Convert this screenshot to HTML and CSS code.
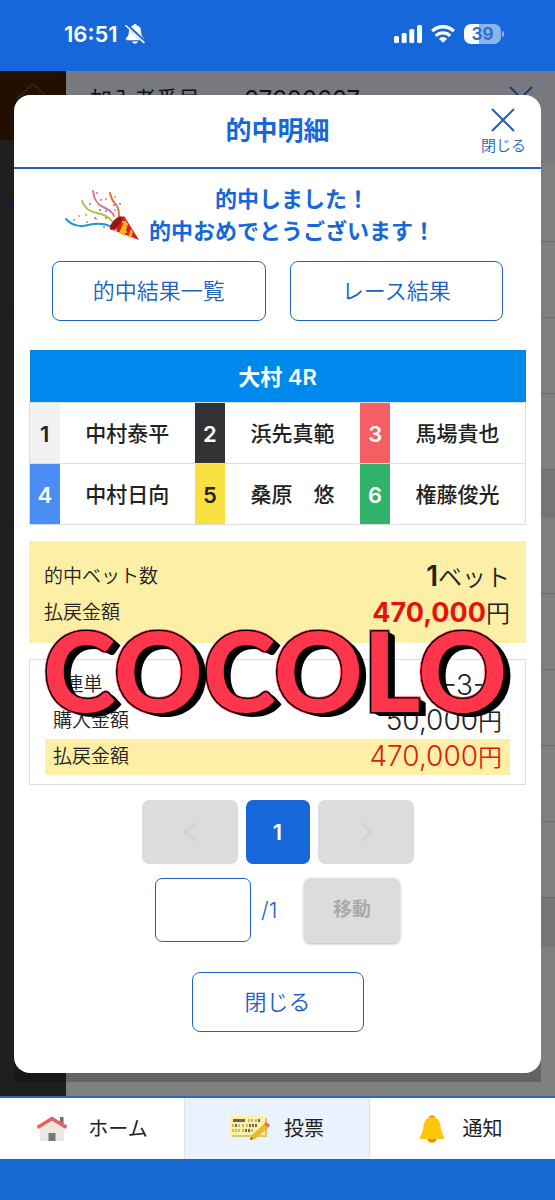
FILE: index.html
```html
<!DOCTYPE html>
<html lang="ja">
<head>
<meta charset="utf-8">
<meta name="viewport" content="width=device-width, initial-scale=1">
<title>的中明細</title>
<link rel="stylesheet" href="styles.css">
</head>
<body>
<header class="status">
  <div class="status-side">
    <span class="clock">16:51</span>
    <svg class="mute" viewBox="0 0 20 20" aria-hidden="true">
      <path d="M10 0C9 0 8.300.7 8.200 1.600 5 2.300 3.900 4.800 3.900 7.600c0 3.500-1 5-2.600 6.400-.9.900-.5 2.200.7 2.200h16c1.200 0 1.600-1.300.7-2.200-1.600-1.400-2.600-2.900-2.600-6.400 0-2.800-1.100-5.300-4.300-6C11.700.7 11 0 10 0zM7.200 17.400c.3 1.400 1.300 2.200 2.800 2.200s2.500-.8 2.800-2.200z" fill="#fff"/>
      <path d="M1.500 1 20 18.200" stroke="#1667d9" stroke-width="3.600"/>
      <path d="M1 1.800 19 18.600" stroke="#fff" stroke-width="1.500" stroke-linecap="round"/>
    </svg>
  </div>
  <div class="status-side status-right">
    <svg class="signal" viewBox="0 0 28 18" aria-hidden="true"><g fill="#fff"><rect x="0" y="11" width="5" height="7" rx="1.500"/><rect x="7.700" y="8" width="5" height="10" rx="1.500"/><rect x="15.300" y="4" width="5" height="14" rx="1.500"/><rect x="23" y="0" width="5" height="18" rx="1.500"/></g></svg>
    <svg class="wifi" viewBox="0 0 24 18" aria-hidden="true"><g fill="none" stroke="#fff" stroke-width="3.300"><path d="M1.200 6.200a15.300 15.300 0 0 1 21.600 0"/><path d="M4.800 10.800a10.200 10.200 0 0 1 14.400 0"/></g><path d="M12 17.800 7.900 13.700a5.800 5.800 0 0 1 8.200 0z" fill="#fff"/></svg>
    <span class="battery">39</span>
  </div>
</header>

<main class="stage">
  <div class="behind" aria-hidden="true">
    <div class="rail">
      <div class="rail-home"><svg viewBox="0 0 40 20"><path d="M3 19 20 3l17 16" fill="none" stroke="#30231c" stroke-width="2"/></svg></div>
      <div class="rail-body"><span class="rail-mark"></span><span class="rail-line"></span></div>
    </div>
    <div class="sheet">
      <div class="sheet-head">
        <span>加入者番号</span><span class="member">07600607</span>
        <svg class="sheet-x" viewBox="0 0 24 24"><path d="M1 1l22 22M23 1 1 23"/></svg>
      </div>
      <div class="line tall"></div><div class="line"></div><div class="line"></div><div class="line"></div>
      <div class="band"></div>
      <div class="line"></div><div class="line"></div><div class="line"></div><div class="line"></div><div class="line"></div>
      <div class="band"></div>
    </div>
  </div>

  <div class="modal-base">
    <section class="modal" role="dialog" aria-labelledby="dialog-title">
      <div class="modal-head">
        <h1 id="dialog-title">的中明細</h1>
        <button class="head-close" type="button">
          <svg viewBox="0 0 24 24" aria-hidden="true"><path d="M1 1l22 22M23 1 1 23"/></svg>
          <span>閉じる</span>
        </button>
      </div>

      <div class="congrats">
        <svg class="cracker" viewBox="0 0 74 52" aria-hidden="true">
          <g fill="none" stroke-linecap="round" stroke-width="2">
            <path d="M28 2c1 9 4 13 10 16 5 2 9 4 11 9" stroke="#e46d9f"/>
            <path d="M45 4c1 7 4 9 7 13 2 3 2 6 2 11" stroke="#ec7148"/>
            <path d="M17 12c3 8 8 11 15 12 6 1 11 3 15 8" stroke="#a2c63c"/>
            <path d="M1 30c6 7 15 8 22 6 8-2 15-2 22 1" stroke="#169bda"/>
          </g>
          <g fill="#e2617f"><circle cx="32" cy="4" r="1"/><circle cx="36" cy="11" r="1"/><circle cx="9" cy="31" r="1"/><circle cx="41" cy="29" r="1"/><circle cx="39" cy="38" r="1"/><circle cx="49" cy="16" r="1"/></g>
          <g fill="#4a86d8"><circle cx="25" cy="15" r="1"/><circle cx="35" cy="21" r="1"/><circle cx="41" cy="22" r="1"/><circle cx="55" cy="15" r="1"/><circle cx="30" cy="29" r="1"/></g>
          <g fill="#e89443"><circle cx="50" cy="8" r="1"/><circle cx="41" cy="10" r="1"/><circle cx="14" cy="27" r="1"/><circle cx="31" cy="30" r="1"/><circle cx="50" cy="21" r="1"/></g>
          <g fill="#8cba3c"><circle cx="21" cy="26" r="1"/><circle cx="22" cy="33" r="1"/><circle cx="34" cy="16" r="1"/></g>
          <path d="M45 40 56 28q4-2 5 2l13 21z" fill="#dc2218"/>
          <path d="m54 44 6-13 3 4-4 12zM63 48l3-8 2 3-2 6z" fill="#f4b51e"/>
          <ellipse cx="51" cy="34" rx="8.500" ry="3.400" transform="rotate(-48 51 34)" fill="#901b16"/>
          <g fill="#fbd65c"><circle cx="51" cy="41" r="1"/><circle cx="61" cy="43" r="1"/><circle cx="58" cy="33" r="1"/></g>
        </svg>
        <p>的中しました！<br>的中おめでとうございます！</p>
      </div>

      <div class="links">
        <button class="outline" type="button">的中結果一覧</button>
        <button class="outline" type="button">レース結果</button>
      </div>

      <table class="race">
        <colgroup><col class="c-no"><col><col class="c-no"><col><col class="c-no"><col></colgroup>
        <thead><tr><th colspan="6">大村 4R</th></tr></thead>
        <tbody>
          <tr><th class="n1">1</th><td>中村泰平</td><th class="n2">2</th><td>浜先真範</td><th class="n3">3</th><td>馬場貴也</td></tr>
          <tr><th class="n4">4</th><td>中村日向</td><th class="n5">5</th><td>桑原　悠</td><th class="n6">6</th><td>権藤俊光</td></tr>
        </tbody>
      </table>

      <div class="result">
        <dl class="summary">
          <div class="row"><dt>的中ベット数</dt><dd><b>1</b><span class="unit">ベット</span></dd></div>
          <div class="row"><dt>払戻金額</dt><dd><b class="win">470,000</b><span class="unit">円</span></dd></div>
        </dl>
        <dl class="detail">
          <div class="row"><dt>3連単</dt><dd>1-3-2</dd></div>
          <div class="row"><dt>購入金額</dt><dd>50,000<span class="unit">円</span></dd></div>
          <div class="row paid"><dt>払戻金額</dt><dd>470,000<span class="unit">円</span></dd></div>
        </dl>
        <div class="stamp">COCOLO</div>
      </div>

      <nav class="pager" aria-label="ページ">
        <button class="page" type="button" disabled aria-label="前へ"><svg viewBox="0 0 12 20"><path d="M11 1 1 10l10 9"/></svg></button>
        <button class="page current" type="button" aria-current="page">1</button>
        <button class="page" type="button" disabled aria-label="次へ"><svg viewBox="0 0 12 20"><path d="m1 1 10 9-10 9"/></svg></button>
      </nav>

      <form class="jump">
        <input id="page-no" type="text" inputmode="numeric" aria-label="ページ番号">
        <label for="page-no">/1</label>
        <button class="move" type="button" disabled>移動</button>
      </form>

      <button class="outline close" type="button">閉じる</button>
    </section>
  </div>
</main>

<nav class="tabs">
  <a href="#home">
    <svg class="i-home" viewBox="0 0 32 26" aria-hidden="true"><rect x="24" y="1" width="3.500" height="9" fill="#6f6f72"/><path d="M4 11 16 3l12 8v14H4z" fill="#ebe7e2"/><path d="M1.500 11.500 16 2.500l14.500 9" fill="none" stroke="#e16360" stroke-width="3.400"/><rect x="12.500" y="17" width="7" height="8" fill="#777576"/></svg>
    <span>ホーム</span>
  </a>
  <a href="#vote" class="active">
    <svg class="i-vote" viewBox="0 0 40 26" aria-hidden="true">
      <path d="M2 2h35v19H2z" fill="#d8c36a"/><path d="M0 0h35v19H0z" fill="#fdf1a8"/><rect x="3" y="3" width="12" height="3" fill="#6c6548"/>
      <g stroke="#a79b68" stroke-width="1.300" fill="none"><path d="M19 3v3M22 3v3M26 3v3M3 8v3M9 8v3M13 8v3M17 8v3M3 13v3M6 13v3M9 13v3M13 13v3M22 13v3"/></g>
      <g stroke="#514b35" stroke-width="1.600"><path d="M29 3v3M6 8v3M20 8v3M23 8v3M26 8v3M16 13v3M19 13v3"/></g>
      <path d="m20 24 2-5L34 8l4 4-13 11z" fill="#e9b924"/><path d="m34 8 2-2 4 3-2 3z" fill="#e36c57"/><path d="m20 24 1-3 2 2z" fill="#6b5429"/>
    </svg>
    <span>投票</span>
  </a>
  <a href="#notice">
    <svg class="i-bell" viewBox="0 0 26 28" aria-hidden="true"><circle cx="13" cy="4" r="3.500" fill="#e07f0b"/><circle cx="13" cy="23" r="4.800" fill="#f08a00"/><path d="M13 2C7.500 2 5 6 4.500 11S3 18 1 21.500C0 23 .5 24 2 24h22c1.500 0 2-1 1-2.500C23 18 22 16 21.500 11S18.500 2 13 2z" fill="#ffc60a"/></svg>
    <span>通知</span>
  </a>
</nav>
<div class="foot"></div>
</body>
</html>
```

FILE: styles.css
```css
* { box-sizing: border-box; }

:root {
  --blue: #1667d9;
  --line-blue: #2162bd;
  --ink: #222;
  --cream: #feefa6;
  --rule: #dcdcdc;
}

body {
  margin: 0;
  min-height: 100vh;
  display: flex;
  flex-direction: column;
  font-family: Inter, "Noto Sans CJK JP", sans-serif;
  font-size: 22px;
  line-height: 32px;
  color: var(--ink);
  background: #7f7f7f;
}

button, input { font: inherit; margin: 0; padding: 0; }
h1, p, dl, dd { margin: 0; }
svg { display: block; flex: none; }

/* status bar */
.status {
  display: flex;
  justify-content: space-between;
  align-items: center;
  height: 71px;
  padding: 0 54px 4px 64px;
  background: var(--blue);
  color: #fff;
}
.status-side { display: flex; align-items: center; gap: 7px; }
.status-right { gap: 9px; }
.clock { font-size: 22px; font-weight: 600; }
.mute { width: 20px; height: 20px; }
.signal { width: 28px; height: 18px; }
.wifi { width: 24px; height: 18px; }
.battery {
  position: relative;
  width: 37px;
  height: 20px;
  border-radius: 7px;
  background: linear-gradient(90deg, #fff 40%, #8ab4ef 40%);
  color: #2e6fce;
  font-size: 17px;
  font-weight: 700;
  line-height: 20px;
  text-align: center;
}
.battery::after {
  content: "";
  position: absolute;
  right: -3px;
  top: 7px;
  width: 2px;
  height: 6px;
  border-radius: 0 2px 2px 0;
  background: #8ab4ef;
}

/* dimmed page and dialog share one grid cell */
.stage { flex: 1; display: grid; }
.behind, .modal-base { grid-area: 1 / 1; }
.behind { display: flex; overflow: hidden; }
.rail { width: 66px; background: #201f20; }
.rail-home { height: 69px; padding: 10px 14px; background: #211000; }
.rail-body { display: flex; flex-direction: column; padding-top: 63px; }
.rail-mark { height: 5px; margin-left: 7px; background: #0d1c40; }
.rail-line { height: 2px; margin-top: 103px; background: #101a30; }
.sheet { flex: 1; }
.sheet-head {
  display: flex;
  height: 92px;
  padding: 12px 22px 0 24px;
  background: #77797f;
  color: #111;
}
.member { margin-left: 44px; font-size: 24px; line-height: 34px; }
.sheet-x {
  width: 24px;
  height: 24px;
  margin: 3px 0 0 auto;
  stroke: #143c75;
  stroke-width: 2;
}
.line { height: 76px; border-bottom: 1px solid #6c6c6c; }
.line.tall { height: 79px; }
.band { height: 48px; background: #757575; }

.modal-base {
  align-self: start;
  margin: 24px 14px 14px;
  padding-bottom: 9px;
  border-radius: 16px 16px 0 0;
  background: linear-gradient(transparent 50%, rgba(0, 0, 0, .22) 50%);
}
.modal {
  padding-bottom: 41px;
  border-radius: 16px;
  background: #fff;
  overflow: hidden;
}
.modal-head {
  display: grid;
  grid-template-columns: 1fr auto 1fr;
  align-items: center;
  height: 74px;
  padding: 0 15px;
  border-bottom: 2px solid var(--line-blue);
}
.modal-head h1 {
  grid-column: 2;
  font-size: 26px;
  font-weight: 700;
  line-height: 32px;
  color: var(--blue);
}
.head-close {
  justify-self: end;
  display: flex;
  flex-direction: column;
  align-items: center;
  gap: 4px;
  padding-top: 2px;
  border: 0;
  background: none;
  color: var(--line-blue);
  font-size: 15px;
  font-weight: 350;
  line-height: 20px;
}
.head-close svg { width: 24px; height: 24px; stroke: var(--line-blue); stroke-width: 2; }

.congrats {
  display: flex;
  align-items: center;
  gap: 10px;
  padding: 14px 0 0 51px;
  color: var(--blue);
  font-weight: 700;
}
.cracker { width: 74px; height: 52px; }
.congrats p { text-align: center; white-space: nowrap; }

.links {
  display: grid;
  grid-template-columns: 1fr 1fr;
  gap: 24px;
  padding: 14px 38px 29px;
}
.outline {
  height: 60px;
  border: 1px solid var(--line-blue);
  border-radius: 8px;
  background: #fff;
  color: var(--line-blue);
  font-size: 22px;
  font-weight: 350;
}

.race {
  width: calc(100% - 30px);
  margin: 0 15px;
  border-collapse: collapse;
  table-layout: fixed;
  font-size: 21px;
}
.c-no { width: 30px; }
.race th, .race td { padding: 2px 0 0; text-align: center; }
.race th { font-size: 22px; font-weight: 600; }
.race td { font-weight: 500; white-space: nowrap; }
.race thead th { height: 52px; background: #0089ec; color: #fff; }
.race tbody tr { height: 61px; border: 1px solid var(--rule); }
.n1 { background: #f1f1f1; }
.n2 { background: #333335; color: #fff; }
.n3 { background: #f35f62; color: #fff; }
.n4 { background: #4a8df5; color: #fff; }
.n5 { background: #f9e144; }
.n6 { background: #30b26c; color: #fff; }

.result { position: relative; margin: 16px 15px 0; }
.row {
  display: flex;
  justify-content: space-between;
  align-items: center;
  height: 36px;
}
dt { font-size: 19px; font-weight: 350; }
dd { font-size: 28px; font-weight: 300; }
dd b { font-weight: 600; }
.unit { font-size: 24px; font-weight: 350; }
.summary { padding: 18px 16px 12px 15px; background: var(--cream); }
.summary .win { color: #e5140a; font-size: 27px; font-weight: 700; }
.detail {
  margin-top: 16px;
  padding: 7px 15px 9px;
  border: 1px solid var(--rule);
}
.detail .row { padding: 0 8px; }
.detail .paid { background: var(--cream); }
.paid dd { color: #d8200f; }

/* name stamp laid over the figures */
.stamp {
  position: absolute;
  left: 14px;
  top: 64px;
  font-family: Lato, sans-serif;
  font-size: 110px;
  font-weight: 900;
  line-height: 128px;
  color: #ff364b;
  -webkit-text-stroke: 4px #ff364b;
  paint-order: stroke fill;
  text-shadow:
    -1px -1px #000, 1px -1px #000, -1px 1px #000, -1px 0 #000, 0 -1px #000,
    1px 1px #000, 2px 1px #000, 3px 2px #000, 4px 2px #000, 5px 3px #000, 6px 3px #000, 7px 4px #000;
  pointer-events: none;
}

.pager {
  display: flex;
  justify-content: center;
  gap: 8px;
  margin-top: 15px;
}
.page {
  display: grid;
  place-items: center;
  width: 96px;
  height: 64px;
  border: 0;
  border-radius: 7px;
  background: #dcdcdc;
}
.page svg { width: 12px; height: 20px; fill: none; stroke: #d0d0d0; stroke-width: 2; }
.page.current { width: 64px; background: var(--blue); color: #fff; font-weight: 600; }

.jump {
  display: flex;
  justify-content: center;
  align-items: center;
  gap: 10px;
  margin-top: 14px;
}
.jump input {
  width: 96px;
  height: 64px;
  border: 1px solid var(--line-blue);
  border-radius: 7px;
  text-align: center;
}
.jump label { width: 33px; color: var(--line-blue); font-weight: 350; }
.move {
  width: 96px;
  height: 65px;
  border: 0;
  border-radius: 7px;
  background: #dcdcdc;
  box-shadow: 0 1px 3px rgba(0, 0, 0, .3);
  color: #aaa;
  font-size: 19px;
  font-weight: 600;
}
.close { display: block; width: 172px; margin: 29px auto 0; }

/* bottom tabs */
.tabs {
  display: grid;
  grid-template-columns: repeat(3, 1fr);
  height: 63px;
  border-top: 2px solid #2f68c0;
  background: #fff;
}
.tabs a {
  display: flex;
  justify-content: center;
  align-items: center;
  gap: 20px;
  border-right: 1px solid #dbe3ee;
  color: var(--ink);
  font-size: 20px;
  text-decoration: none;
}
.tabs .active { gap: 14px; background: #eaf2fe; }
.tabs a:last-child { gap: 18px; padding-right: 4px; border-right: 0; }
.i-home { width: 32px; height: 26px; }
.i-vote { width: 40px; height: 26px; }
.i-bell { width: 26px; height: 28px; }
.foot { height: 41px; background: #1769d2; }
```
